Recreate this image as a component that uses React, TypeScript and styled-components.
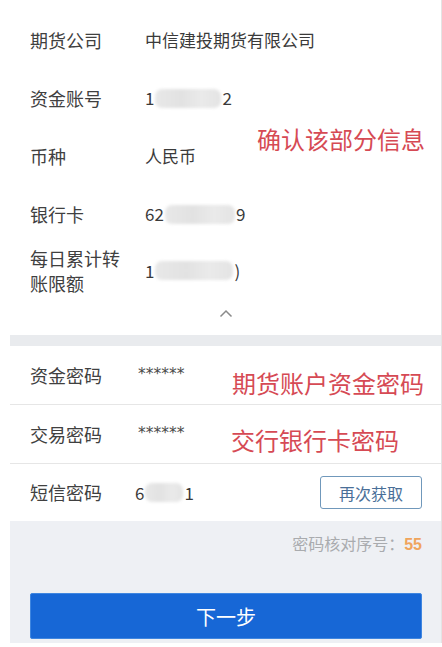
import React from 'react';
import styled, { createGlobalStyle } from 'styled-components';

const Global = createGlobalStyle`
  html, body { margin: 0; padding: 0; background: #fff; }
  body { font-family: "Noto Sans CJK SC", "Noto Sans", sans-serif; }
  * { box-sizing: border-box; }
`;

const Page = styled.div`
  position: relative;
  width: 442px;
  height: 647px;
  overflow: hidden;
  background: #fff;
  padding-left: 10px;
`;

const Screen = styled.div`
  width: 432px;
  border-right: 1px solid #e4e4e4;
  display: flex;
  flex-direction: column;
`;

const InfoSection = styled.section`
  background: #fff;
  padding-top: 11px;
  display: flex;
  flex-direction: column;
`;

const InfoRow = styled.div<{ h: number }>`
  display: flex;
  align-items: center;
  height: ${p => p.h}px;
  padding-left: 20px;
`;

const Label = styled.div<{ w: number }>`
  width: ${p => p.w}px;
  flex-shrink: 0;
  font-size: 18px;
  line-height: 25px;
  color: #404040;
`;

const Value = styled.div`
  display: flex;
  align-items: center;
  font-size: 17px;
  line-height: 24px;
  color: #3a3a3a;
`;

const Masked = styled.span<{ w: number }>`
  display: inline-block;
  width: ${p => p.w}px;
  height: 19px;
  margin: 0 1px;
  border-radius: 7px;
  background: linear-gradient(90deg, #e8e8e8, #e2e2e2 40%, #eaeaea 70%, #e4e4e4);
  filter: blur(1.5px);
`;

const ChevronRow = styled.div`
  height: 37px;
  display: flex;
  justify-content: center;
  align-items: flex-start;
  padding-top: 11px;
`;

const Band = styled.div`
  height: 11px;
  background: #e9ebee;
`;

const PwdSection = styled.section`
  background: #fff;
  display: flex;
  flex-direction: column;
`;

const PwdRow = styled.div<{ h: number; divider?: boolean }>`
  display: flex;
  align-items: center;
  height: ${p => p.h}px;
  padding-left: 20px;
  padding-right: 19px;
  border-top: ${p => (p.divider ? '1px solid #e6e6e6' : 'none')};
`;

const Stars = styled.span`
  font-family: "DejaVu Sans", sans-serif;
  font-size: 15.5px;
  letter-spacing: 0;
  color: #4a4a4a;
  position: relative;
  top: -1px;
  -webkit-font-smoothing: antialiased;
`;

const ResendButton = styled.button`
  margin-left: auto;
  width: 102px;
  height: 33px;
  border: 1.5px solid #7098bb;
  border-radius: 3px;
  background: #fff;
  color: #4a6f98;
  font-family: "Noto Sans CJK SC", sans-serif;
  font-size: 16px;
  padding: 0;
`;

const Footer = styled.section`
  background: #eef0f4;
  padding: 11px 19px 4px 20px;
  display: flex;
  flex-direction: column;
`;

const Hint = styled.div`
  text-align: right;
  font-size: 16px;
  line-height: 22px;
  color: #a9abae;
`;

const HintNum = styled.span`
  color: #f0a45c;
  font-weight: 700;
  font-family: "Liberation Sans", sans-serif;
`;

const NextButton = styled.button`
  margin-top: 37px;
  height: 46px;
  width: 100%;
  border: 1px solid #3f86e0;
  border-radius: 2px;
  background: #1767d6;
  color: #fff;
  font-family: "Noto Sans CJK SC", sans-serif;
  font-size: 20px;
  padding: 0;
`;

const Note = styled.div<{ left: number; top: number }>`
  position: absolute;
  left: ${p => p.left}px;
  top: ${p => p.top}px;
  font-size: 24px;
  line-height: 24px;
  color: #d64a54;
  white-space: nowrap;
`;

export default function App() {
  return (
    <>
      <Global />
      <Page>
        <Screen>
          <InfoSection>
            <InfoRow h={58}>
              <Label w={115}>期货公司</Label>
              <Value>中信建投期货有限公司</Value>
            </InfoRow>
            <InfoRow h={58}>
              <Label w={115}>资金账号</Label>
              <Value>1<Masked w={66} />2</Value>
            </InfoRow>
            <InfoRow h={58}>
              <Label w={115}>币种</Label>
              <Value>人民币</Value>
            </InfoRow>
            <InfoRow h={58}>
              <Label w={115}>银行卡</Label>
              <Value>62<Masked w={70} />9</Value>
            </InfoRow>
            <InfoRow h={55}>
              <Label w={115}>每日累计转<br />账限额</Label>
              <Value>1<Masked w={78} />)</Value>
            </InfoRow>
            <ChevronRow>
              <svg width="14" height="9" viewBox="0 0 14 9">
                <polyline points="1.5,7.5 7,2 12.5,7.5" fill="none" stroke="#8a8a8a" strokeWidth="1.5" />
              </svg>
            </ChevronRow>
          </InfoSection>
          <Band />
          <PwdSection>
            <PwdRow h={58}>
              <Label w={108}>资金密码</Label>
              <Stars>******</Stars>
            </PwdRow>
            <PwdRow h={59} divider>
              <Label w={108}>交易密码</Label>
              <Stars>******</Stars>
            </PwdRow>
            <PwdRow h={58} divider>
              <Label w={105}>短信密码</Label>
              <Value>6<Masked w={38} />1</Value>
              <ResendButton>再次获取</ResendButton>
            </PwdRow>
          </PwdSection>
          <Footer>
            <Hint>
              密码核对序号：<HintNum>55</HintNum>
            </Hint>
            <NextButton>下一步</NextButton>
          </Footer>
        </Screen>
        <Note left={257} top={127}>确认该部分信息</Note>
        <Note left={232} top={371}>期货账户资金密码</Note>
        <Note left={231} top={428}>交行银行卡密码</Note>
      </Page>
    </>
  );
}
